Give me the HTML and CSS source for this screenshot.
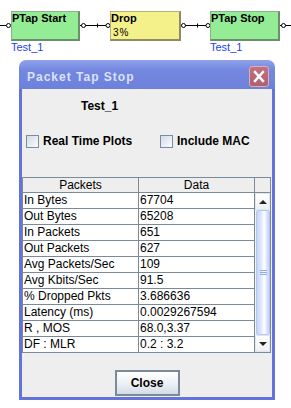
FILE: index.html
```html
<!DOCTYPE html>
<html lang="en">
<head>
    <meta charset="UTF-8">
    <meta name="viewport" content="width=device-width, initial-scale=1.0">
    <title>Packet Tap Stop</title>
    <link rel="stylesheet" href="styles.css">
</head>
<body>

    <!-- Flow diagram -->
    <div class="canvas">
        <svg class="wires" width="291" height="60" viewBox="0 0 291 60">
            <g stroke="#000" stroke-width="1" fill="none">
                <line x1="0" y1="25.5" x2="6" y2="25.5"/>
                <line x1="80" y1="25.5" x2="106" y2="25.5"/>
                <line x1="97.5" y1="23.5" x2="97.5" y2="27.5"/>
                <line x1="181" y1="25.5" x2="206" y2="25.5"/>
                <line x1="197.5" y1="23.5" x2="197.5" y2="27.5"/>
                <line x1="280" y1="25.5" x2="291" y2="25.5"/>
            </g>
            <g stroke="#000" stroke-width="1" fill="#fff">
                <circle cx="8.5" cy="25.5" r="2"/>
                <circle cx="83.5" cy="25.5" r="2"/>
                <circle cx="108" cy="25.5" r="2"/>
                <circle cx="183.5" cy="25.5" r="2"/>
                <circle cx="208" cy="25.5" r="2"/>
                <circle cx="283.5" cy="25.5" r="2"/>
            </g>
        </svg>

        <div class="node node-green node-start">
            <div class="node-title">PTap Start</div>
        </div>
        <div class="node-label label-start">Test_1</div>

        <div class="node node-yellow node-drop">
            <div class="node-title">Drop</div>
            <div class="node-sub">3%</div>
        </div>

        <div class="node node-green node-stop">
            <div class="node-title">PTap Stop</div>
        </div>
        <div class="node-label label-stop">Test_1</div>
    </div>

    <!-- Dialog -->
    <div class="dialog">
        <div class="titlebar">
            <span class="title">Packet Tap Stop</span>
            <span class="close-x">
                <svg width="18" height="19" viewBox="0 0 18 19">
                    <g stroke="#fff" stroke-width="2.4" stroke-linecap="square">
                        <line x1="5" y1="5" x2="13" y2="14"/>
                        <line x1="13" y1="5" x2="5" y2="14"/>
                    </g>
                </svg>
            </span>
        </div>

        <div class="dlg-body">
            <div class="dlg-name">Test_1</div>

            <div class="checks">
                <label class="check"><span class="box"></span>Real Time Plots</label>
                <label class="check"><span class="box"></span>Include MAC</label>
            </div>

            <div class="grid">
                <div class="th">Packets</div>
                <div class="th">Data</div>
                <div class="th"></div>

                <div class="td">In Bytes</div><div class="td">67704</div>
                <div class="scrollbar">
                    <div class="sb-btn"><span class="arrow-up"></span></div>
                    <div class="sb-thumb">
                        <span class="grip"></span>
                    </div>
                    <div class="sb-btn"><span class="arrow-down"></span></div>
                </div>
                <div class="td">Out Bytes</div><div class="td">65208</div>
                <div class="td">In Packets</div><div class="td">651</div>
                <div class="td">Out Packets</div><div class="td">627</div>
                <div class="td">Avg Packets/Sec</div><div class="td">109</div>
                <div class="td">Avg Kbits/Sec</div><div class="td">91.5</div>
                <div class="td">% Dropped Pkts</div><div class="td">3.686636</div>
                <div class="td">Latency (ms)</div><div class="td">0.0029267594</div>
                <div class="td">R , MOS</div><div class="td">68.0,3.37</div>
                <div class="td">DF : MLR</div><div class="td">0.2 : 3.2</div>
            </div>

            <div class="actions">
                <button class="btn">Close</button>
            </div>
        </div>
    </div>

</body>
</html>
```

FILE: styles.css
```css
body {
    margin: 0;
    font-family: "Liberation Sans", Arial, sans-serif;
    font-size: 12px;
    color: #000;
    background: #fff;
}

/* Diagram */

.canvas {
    position: relative;
    height: 60px;
}

.wires {
    position: absolute;
    top: 0;
    left: 0;
}

.node {
    position: absolute;
    top: 11px;
    height: 30px;
    box-sizing: border-box;
    border-style: solid;
    border-width: 1px 2px 2px 1px;
}

.node-green {
    background-color: #94ec94;
    border-color: #8fb08f #6b8f6b #6b8f6b #8fb08f;
}

.node-yellow {
    background-color: #f4f08a;
    border-color: #b3b080 #8f8c5f #8f8c5f #b3b080;
}

.node-start {
    left: 11px;
    width: 69px;
}

.node-drop {
    left: 110px;
    width: 71px;
}

.node-stop {
    left: 210px;
    width: 70px;
}

.node-title {
    font-size: 11px;
    font-weight: bold;
    line-height: 12px;
}

.node-sub {
    font-size: 10px;
    line-height: 12px;
    letter-spacing: 1px;
    padding-left: 2px;
    margin-top: 3px;
}

.node-label {
    position: absolute;
    top: 41px;
    font-size: 11px;
    line-height: 13px;
    color: #1b3ff0;
}

.label-start {
    left: 11px;
}

.label-stop {
    left: 210px;
}

/* Dialog */

.dialog {
    margin-left: 19px;
    width: 256px;
}

.titlebar {
    height: 29px;
    box-sizing: border-box;
    border-radius: 7px 7px 0 0;
    background: linear-gradient(#90a2ea, #7487df 35%, #6d81dc);
    display: flex;
    justify-content: space-between;
    align-items: flex-start;
    padding: 6px 6px 0 8px;
}

.title {
    margin-top: 4px;
    color: #dbe2f8;
    font-weight: bold;
    font-size: 12px;
    line-height: 14px;
    letter-spacing: 1px;
}

.close-x {
    width: 20px;
    height: 21px;
    box-sizing: border-box;
    border: 1px solid #dcaeb8;
    border-radius: 3px;
    background: linear-gradient(#c27282, #b35e6e);
}

.close-x svg {
    display: block;
}

.dlg-body {
    height: 311px;
    box-sizing: border-box;
    border: 3px solid #6373da;
    border-top: 0;
    background-color: #eeeeee;
}

.dlg-name {
    padding: 10px 0 0 59px;
    font-weight: bold;
    line-height: 14px;
}

.checks {
    display: flex;
    margin-top: 21px;
    padding-left: 4px;
    font-weight: bold;
    line-height: 14px;
}

.check {
    display: flex;
    align-items: center;
    gap: 4px;
}

.check:first-child {
    width: 134px;
}

.box {
    width: 13px;
    height: 13px;
    box-sizing: border-box;
    border: 1px solid #7c8ca0;
    background: linear-gradient(to bottom right, #d3dbe8, #fafbfd);
}

/* Table */

.grid {
    margin-top: 29px;
    display: grid;
    grid-template-columns: 116px 116px 16px;
    grid-template-rows: 15px repeat(10, 16px);
    width: 249px;
    box-sizing: border-box;
    border-left: 1px solid #7a8a99;
    border-top: 1px solid #7a8a99;
}

.th,
.td {
    box-sizing: border-box;
    border-right: 1px solid #7a8a99;
    border-bottom: 1px solid #7a8a99;
    white-space: nowrap;
    overflow: hidden;
}

.th {
    background-color: #eeeeee;
    text-align: center;
    line-height: 14px;
}

.td {
    background-color: #fff;
    padding-left: 1px;
    line-height: 15px;
}

.scrollbar {
    grid-column: 3;
    grid-row: 2 / span 10;
    box-sizing: border-box;
    border-right: 1px solid #7a8a99;
    border-bottom: 1px solid #7a8a99;
    background-color: #f3f4f8;
    display: flex;
    flex-direction: column;
}

.sb-btn {
    height: 15px;
    display: flex;
    align-items: center;
    justify-content: center;
    background: linear-gradient(#ffffff, #eef0f4);
    border: 1px solid #e2e6ee;
}

.arrow-up {
    width: 0;
    height: 0;
    border-left: 4px solid transparent;
    border-right: 4px solid transparent;
    border-bottom: 4px solid #222;
}

.arrow-down {
    width: 0;
    height: 0;
    border-left: 4px solid transparent;
    border-right: 4px solid transparent;
    border-top: 4px solid #222;
}

.sb-thumb {
    flex: 1;
    margin: 0 0 0 1px;
    border: 1px solid #b4c6f2;
    border-radius: 2px;
    background: linear-gradient(to right, #c4d3f6, #e4ebfb 40%, #ffffff 60%, #c2d1f4);
    display: flex;
    align-items: center;
    justify-content: center;
}

.grip {
    width: 7px;
    height: 5px;
    background: linear-gradient(#8fa8e8 0 1px, transparent 1px 2px, #8fa8e8 2px 3px, transparent 3px 4px, #8fa8e8 4px 5px);
}

/* Buttons */

.actions {
    margin-top: 17px;
    display: flex;
    justify-content: center;
}

.btn {
    width: 65px;
    height: 26px;
    box-sizing: border-box;
    border: 2px solid #7a8a99;
    box-shadow: inset 0 1px 0 #fff;
    background: linear-gradient(#ffffff, #eceff4 55%, #d3dbe6);
    font-family: "Liberation Sans", Arial, sans-serif;
    font-size: 12px;
    font-weight: bold;
    color: #000;
    padding: 0;
}
```
